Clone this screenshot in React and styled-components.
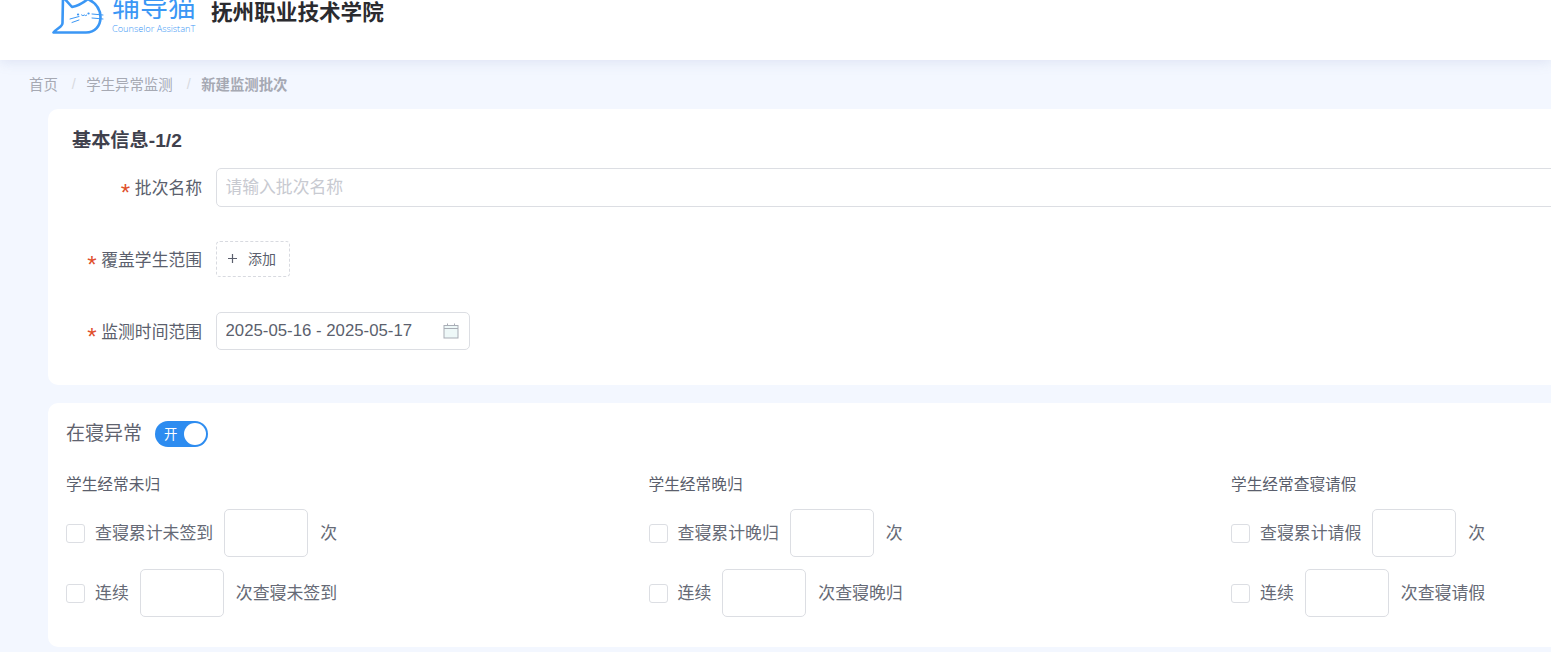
import React from 'react'
import styled, { createGlobalStyle } from 'styled-components'

const GlobalStyle = createGlobalStyle`
  html, body {
    margin: 0;
    height: 100%;
    overflow: hidden;
    background: #f3f7ff;
    font-family: "Liberation Sans", "Noto Sans CJK SC", sans-serif;
  }
  * {
    box-sizing: border-box;
  }
`

const Page = styled.div`
  width: 1551px;
  height: 652px;
  overflow: hidden;
`

const Header = styled.header`
  height: 60px;
  display: flex;
  align-items: flex-end;
  padding: 0 0 26px 52px;
  background: #fff;
  box-shadow: 0 2px 12px rgba(120, 140, 190, 0.18);
  position: relative;
`

const LogoText = styled.div`
  width: 84px;
  display: flex;
  flex-direction: column;
  margin-left: 9px;
  color: #3b97f5;
`

const LogoName = styled.span`
  font-size: 28px;
  line-height: 30px;
  white-space: nowrap;
`

const LogoSub = styled.span`
  font-size: 9.2px;
  line-height: 12px;
  font-family: "Open Sans", sans-serif;
  font-weight: 300;
  white-space: nowrap;
  margin-bottom: -1px;
`

const School = styled.h1`
  margin: 0 0 6px 15px;
  font-size: 21.6px;
  line-height: 30px;
  font-weight: 700;
  color: #2b2b2f;
  white-space: nowrap;
`

const Crumbs = styled.nav`
  height: 49px;
  padding: 0 0 2px 29px;
  display: flex;
  align-items: center;
  font-size: 14.4px;
  color: #a6a9b3;
`

const Sep = styled.span`
  margin: 0 10.5px 0 14px;
  color: #d8dae0;
`

const Current = styled.span`
  font-weight: 700;
`

const Card = styled.section`
  width: 1800px;
  margin-left: 48px;
  background: #fff;
  border-radius: 10px;
  padding: ${props => props.padding};
  margin-bottom: 18px;
`

const Title = styled.h2`
  margin: 0 0 14px;
  padding-top: 1px;
  font-size: 19.2px;
  line-height: 26px;
  font-weight: 700;
  color: #3f414d;
`

const Form = styled.div`
  display: grid;
  grid-template-columns: 130px 1fr;
  column-gap: 14px;
  row-gap: 34px;
`

const Label = styled.label`
  justify-self: end;
  align-self: center;
  padding-top: 3px;
  font-size: 16.8px;
  line-height: 26px;
  color: #5b5f6d;
  white-space: nowrap;
  &::before {
    content: '*';
    display: inline-block;
    width: 14px;
    margin-right: 2.5px;
    font-family: "Liberation Mono", monospace;
    font-size: 24px;
    font-weight: 300;
    line-height: 0;
    vertical-align: -8px;
    color: #e0502c;
  }
`

const TextInput = styled.input`
  display: block;
  height: ${props => props.$height || 39}px;
  width: ${props => props.$width || '100%'};
  padding: 0 8.5px;
  border: 1px solid #dcdee3;
  border-radius: 5px;
  outline: none;
  background: #fff;
  font: inherit;
  font-size: 16.8px;
  color: #5b5f6d;
  &::placeholder {
    color: #c8cad1;
  }
`

const AddButton = styled.button`
  width: 74px;
  height: 36px;
  margin-bottom: 1px;
  display: flex;
  align-items: center;
  padding: 0 0 2px 10px;
  gap: 10px;
  background: #fff;
  border: 1px dashed #d8dae0;
  border-radius: 4px;
  font-family: inherit;
  font-size: 14px;
  color: #5b5f6d;
`

const DateField = styled.div`
  position: relative;
  width: 254px;
  height: 38px;
`

const DateIcon = styled.svg`
  position: absolute;
  right: 11px;
  top: 11px;
`

const SwitchRow = styled.div`
  display: flex;
  align-items: center;
  gap: 13px;
  height: 26px;
`

const SectionName = styled.span`
  font-size: 19px;
  line-height: 24px;
  margin-top: -1px;
  color: #5f636f;
`

const Switch = styled.div`
  width: 53px;
  height: 26px;
  border-radius: 13px;
  background: #2d8cf0;
  display: flex;
  align-items: center;
  justify-content: space-between;
  padding: 0 2px 3px 9px;
  color: #fff;
  font-size: 13.4px;
`

const Knob = styled.span`
  width: 22px;
  height: 22px;
  margin-bottom: -3px;
  border-radius: 50%;
  background: #fff;
`

const Columns = styled.div`
  display: grid;
  grid-template-columns: repeat(3, 582.5px);
  margin-top: 25px;
`

const Column = styled.div`
  display: flex;
  flex-direction: column;
  gap: 12px;
`

const ColumnTitle = styled.div`
  font-size: 15.7px;
  line-height: 24px;
  padding-top: 1px;
  color: #5b5f6d;
`

const Rule = styled.div`
  display: flex;
  align-items: center;
  height: 48px;
  font-size: 16.9px;
  color: #666a76;
  white-space: nowrap;
`

const RuleText = styled.span`
  margin-bottom: 4px;
`

const Check = styled.span`
  width: 19px;
  height: 19px;
  margin-right: 10px;
  border: 1px solid #dcdee3;
  border-radius: 3px;
  background: #fff;
`

const Count = styled.span`
  width: 84px;
  height: 48px;
  margin: 0 12px 0 11px;
  border: 1px solid #dcdee3;
  border-radius: 5px;
  background: #fff;
`

const CatLogo = () => (
  <svg width="51" height="34" viewBox="0 0 51 34" fill="none" stroke="#3b97f5" strokeLinecap="round" strokeLinejoin="round" style={{ overflow: 'visible' }}>
    <path d="M1.5 32.5 H34 C43 32.5 48.5 26 48.5 17 C48.5 9 44 3 36 -1 C31 3 26 6 20 7 L11 -3 L10.5 23 C10.5 27 5 28 1.5 32.5 Z" strokeWidth="2.6" />
    <path d="M26 14.5 h.1 M36.5 13.5 h.1" strokeWidth="2.2" />
    <path d="M29.5 15 q1.5 1.4 3 0 q1 1.2 2.2 .2" strokeWidth="1" />
    <path d="M18 19 L27 16.5 M20 22.5 L27 20 M40 14 L51 15 M40 18 L51 19" strokeWidth="1" />
  </svg>
)

const sections = [
  { title: '学生经常未归', total: '查寝累计未签到', streak: '次查寝未签到' },
  { title: '学生经常晚归', total: '查寝累计晚归', streak: '次查寝晚归' },
  { title: '学生经常查寝请假', total: '查寝累计请假', streak: '次查寝请假' },
]

const App = () => (
  <Page>
    <GlobalStyle />
    <Header>
      <CatLogo />
      <LogoText>
        <LogoName>辅导猫</LogoName>
        <LogoSub>Counselor AssistanT</LogoSub>
      </LogoText>
      <School>抚州职业技术学院</School>
    </Header>
    <Crumbs>
      <span>首页</span>
      <Sep>/</Sep>
      <span>学生异常监测</span>
      <Sep>/</Sep>
      <Current>新建监测批次</Current>
    </Crumbs>
    <Card padding="18px 24px 35px">
      <Title>基本信息-1/2</Title>
      <Form>
        <Label>批次名称</Label>
        <TextInput placeholder="请输入批次名称" />
        <Label>覆盖学生范围</Label>
        <div>
          <AddButton>
            <svg width="11" height="11" viewBox="0 0 11 11" stroke="#5b5f6d" strokeWidth="1.2">
              <path d="M5.5 1 V10 M1 5.5 H10" />
            </svg>
            添加
          </AddButton>
        </div>
        <Label>监测时间范围</Label>
        <DateField>
          <TextInput $height={38} readOnly value="2025-05-16 - 2025-05-17" />
          <DateIcon width="16" height="16" viewBox="0 0 16 16" fill="none" strokeWidth="1">
            <rect x="1" y="2.5" width="14" height="12.5" fill="#eef8f8" stroke="#a9adb6" />
            <path d="M1 5.5 H15 M4.5 .5 V3 M11.5 .5 V3" stroke="#a9adb6" />
          </DateIcon>
        </DateField>
      </Form>
    </Card>
    <Card padding="18px 18px 30px">
      <SwitchRow>
        <SectionName>在寝异常</SectionName>
        <Switch>
          开
          <Knob />
        </Switch>
      </SwitchRow>
      <Columns>
        {sections.map(section => (
          <Column key={section.title}>
            <ColumnTitle>{section.title}</ColumnTitle>
            <Rule>
              <Check />
              <RuleText>{section.total}</RuleText>
              <Count />
              <RuleText>次</RuleText>
            </Rule>
            <Rule>
              <Check />
              <RuleText>连续</RuleText>
              <Count />
              <RuleText>{section.streak}</RuleText>
            </Rule>
          </Column>
        ))}
      </Columns>
    </Card>
  </Page>
)

export default App
